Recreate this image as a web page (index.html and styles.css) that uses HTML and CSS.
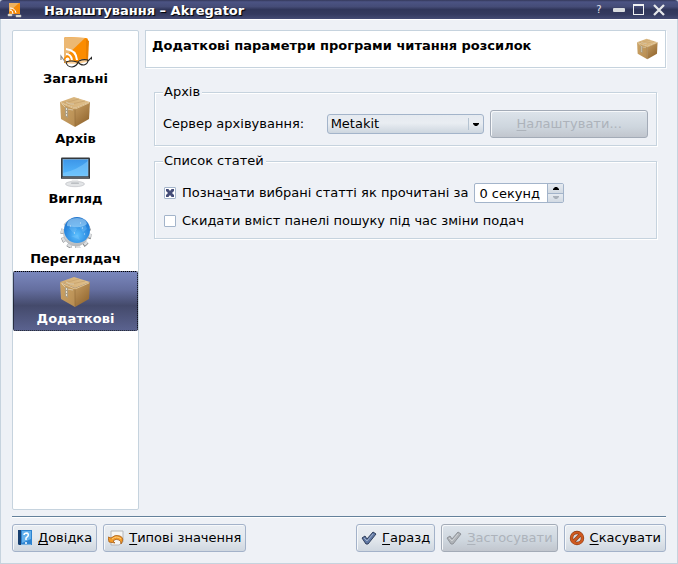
FILE: index.html
```html
<!DOCTYPE html>
<html lang="uk">
<head>
<meta charset="utf-8">
<title>Налаштування – Akregator</title>
<link rel="stylesheet" href="styles.css">
</head>
<body>
<svg class="defs" aria-hidden="true">
  <defs>
    <linearGradient id="boxL" x1="0" y1="0" x2="1" y2="1"><stop offset="0" stop-color="#cda567"/><stop offset="1" stop-color="#b68c52"/></linearGradient>
    <linearGradient id="boxR" x1="0" y1="0" x2="0.6" y2="1"><stop offset="0" stop-color="#c8a066"/><stop offset="1" stop-color="#93672f"/></linearGradient>
    <linearGradient id="boxT" x1="0" y1="0" x2="1" y2="0"><stop offset="0" stop-color="#d2ac72"/><stop offset="1" stop-color="#e0c08c"/></linearGradient>
    <linearGradient id="screen" x1="0" y1="0" x2="0" y2="1"><stop offset="0" stop-color="#3d96e8"/><stop offset="1" stop-color="#55baff"/></linearGradient>
    <radialGradient id="globe" cx="0.5" cy="0.7" r="0.75"><stop offset="0" stop-color="#5cc0ff"/><stop offset="0.6" stop-color="#2b8ae0"/><stop offset="1" stop-color="#1f6fc6"/></radialGradient>
    <linearGradient id="metal" x1="0" y1="0" x2="0" y2="1"><stop offset="0" stop-color="#ffffff"/><stop offset="1" stop-color="#b4b8bc"/></linearGradient>
    <symbol id="box" viewBox="1 0 32 32">
      <path d="M1 6 L16 12 V31 L2 23 Z" fill="url(#boxL)"/>
      <path d="M16 12 L31 6 L30 23 L16 31 Z" fill="url(#boxR)"/>
      <path d="M1 6 L15 1 L31 6 L16 12 Z" fill="url(#boxT)"/>
      <path d="M5 7 L20 3 M8 9 L26 5" stroke="#c7a26d" stroke-width="0.800" fill="none"/>
      <path d="M2 7 L16 13 L30 7" stroke="#e8cfa2" stroke-width="0.800" fill="none"/>
      <path d="M16 13 V30" stroke="#8d6836" stroke-width="0.600"/>
      <path d="M3 8 L8 13 L14 14 M7 6 L11 8 L15 8" stroke="#ddd2ba" stroke-width="0.800" fill="none"/>
      <path d="M6 11 L9 12 V22 L6 20 Z" fill="#aa9d83"/>
      <path d="M7.500 12 V20" stroke="#e6e0d2" stroke-dasharray="2 1"/>
    </symbol>
    <symbol id="feed" viewBox="0 0 32 32">
      <path d="M4 3 Q4 1 6 1 L26 2 Q28 2 28 4 L28 25 Q20 29 4 27 Z" fill="#fb8c00"/>
      <path d="M4 3 Q4 1 6 1 L25 2 L4 22 Z" fill="#ecb873"/>
      <path d="M26 3 L29 5 L28 25 L26 26 Z" fill="#e98000"/>
      <g fill="none" stroke="#fff" stroke-width="2"><path d="M6 13 Q16 14 17 24"/><path d="M6 18 Q11 18 12 24"/></g>
      <circle cx="7.500" cy="23.500" r="2" fill="#fff"/>
      <g fill="#fff" fill-opacity="0.600"><ellipse cx="12" cy="27.500" rx="5" ry="3"/><ellipse cx="23" cy="26" rx="5" ry="3"/></g>
      <path d="M6 26 Q7 31 12 31 Q17 30 18 26 M18 25 Q19 29 24 29 Q28 28 28 24 M28 25 L32 21 L32 24 M6 26 Q11 24 17 26 M19 25 Q23 23 28 24" fill="none" stroke="#292929" stroke-width="1.100"/>
      <path d="M6 27 L1 20 V24" fill="none" stroke="#8d8d8d" stroke-width="1.200"/>
    </symbol>
    <symbol id="monitor" viewBox="1 0 32 32">
      <ellipse cx="16" cy="28" rx="9.500" ry="2.700" fill="#e2e4e6" stroke="#b8bbbf" stroke-width="0.600"/>
      <path d="M13 23 H19 L20 28 H12 Z" fill="url(#metal)"/>
      <rect x="2" y="1.500" width="29" height="21.500" rx="1" fill="#34383c"/>
      <rect x="4" y="3.500" width="25" height="16.500" fill="url(#screen)" stroke="#86bce9" stroke-width="0.700"/>
      <path d="M4 17 Q18 14 29 5 V20 H4 Z" fill="#8dd2ff" opacity="0.450"/>
      <path d="M3 22 H30" stroke="#a2a6a9" stroke-width="0.800"/>
    </symbol>
    <symbol id="web" viewBox="0 0 32 32">
      <circle cx="16" cy="18" r="13" fill="none" stroke="#7d8084" stroke-width="5" stroke-dasharray="4.500 3.670"/>
      <circle cx="16" cy="17.500" r="13" fill="none" stroke="#dcdee0" stroke-width="4.500" stroke-dasharray="4 4.170"/>
      <circle cx="16" cy="17.500" r="12.500" fill="url(#metal)" stroke="#b4b7bc" stroke-width="0.700"/>
      <circle cx="17" cy="14" r="13" fill="url(#globe)"/>
      <path d="M7 8 Q8 2 17 2 Q26 2 27 8 Q22 13 7 10 Z" fill="#b4defc" opacity="0.550"/>
      <path d="M9 12 L13 9 L17 13 L14 18 Z M19 10 L25 8 L27 13 L23 16 Z M11 20 L18 19 L20 24 Z" fill="#8bcefb" opacity="0.300"/>
      <path d="M10 10h1M20 7h1M22 12h1M14 17h1M24 18h1" stroke="#fff" opacity="0.700"/>
    </symbol>
    <symbol id="check" viewBox="0 0 16 16"><path d="M1 8 L4 6 L6 9 L12 2 L15 4 L7 14 L5 14 Z" stroke-width="1" stroke-linejoin="round"/><path d="M3 8 L6 11 L12 4" fill="none" stroke="#fff" stroke-opacity="0.400" stroke-width="1"/></symbol>
  </defs>
</svg>

<div class="window">
  <header class="titlebar">
    <svg class="icon-app" viewBox="0 0 16 16" aria-hidden="true"><path d="M2 1 H13 V12 H2 Z" fill="#f48a0b"/><path d="M2 1 H12 L2 10 Z" fill="#eeb15f"/><path d="M3 6 Q8 6 9 11 M3 8 Q6 8 6 12" stroke="#fff" stroke-width="1" fill="none"/><path d="M1 12 H5 V14 H1 Z M9 13 H14 V15 H9 Z M5 13 H9" fill="#e3e3df" stroke="#b9b9b5" stroke-width="0.500"/></svg>
    <h1 class="title">Налаштування – Akregator</h1>
    <div class="window-controls">
      <button class="control help" aria-label="Що це?">?</button>
      <button class="control" aria-label="Мінімізувати"><svg viewBox="0 0 12 12"><rect y="4" width="12" height="4" rx="1" fill="#d9dcdf"/></svg></button>
      <button class="control" aria-label="Максимізувати"><svg viewBox="0 0 12 12"><path d="M0 0 H11 V11 H0 Z M1 2 V10 H10 V2 Z" fill="#f0f1f3" fill-rule="evenodd"/></svg></button>
      <button class="control" aria-label="Закрити"><svg viewBox="0 0 12 12"><path d="M1 1 L11 11 M11 1 L1 11" stroke="#e4e6e9" stroke-width="2.300"/></svg></button>
    </div>
  </header>

  <main class="body">
    <div class="panes">
      <nav class="sidebar" aria-label="Розділи">
        <a class="page" href="#general"><svg class="page-icon"><use href="#feed"/></svg>Загальні</a>
        <a class="page" href="#archive"><svg class="page-icon"><use href="#box"/></svg>Архів</a>
        <a class="page" href="#appearance"><svg class="page-icon"><use href="#monitor"/></svg>Вигляд</a>
        <a class="page" href="#browser"><svg class="page-icon"><use href="#web"/></svg>Переглядач</a>
        <a class="page selected" href="#advanced" aria-current="page"><svg class="page-icon"><use href="#box"/></svg>Додаткові</a>
      </nav>
      <form class="content" id="advanced">
        <div class="page-header">
          <h2 class="page-title">Додаткові параметри програми читання розсилок</h2>
          <svg class="header-icon" aria-hidden="true"><use href="#box"/></svg>
        </div>
        <div class="groups">
          <fieldset class="group">
            <legend>Архів</legend>
            <div class="archive-row">
              <label for="backend">Сервер архівування:</label>
              <span class="combo">
                <select id="backend"><option>Metakit</option></select>
                <svg class="combo-arrow" viewBox="0 0 6 4" aria-hidden="true"><path d="M0 0 H6 V1 L4 3 H2 L0 1 Z"/></svg>
              </span>
              <button class="button configure" type="button" disabled><span><u>Н</u>алаштувати...</span></button>
            </div>
          </fieldset>
          <fieldset class="group articles">
            <legend>Список статей</legend>
            <div class="option">
              <input class="tick" type="checkbox" id="mark" checked>
              <label for="mark">Позна<u>ч</u>ати вибрані статті як прочитані за</label>
              <span class="spin">
                <input class="spin-value" type="text" value="0 секунд" aria-label="Затримка">
                <span class="spin-buttons">
                  <button type="button" aria-label="Більше"><svg viewBox="0 0 6 3"><path d="M2 0 H4 L6 2 V3 H0 V2 Z"/></svg></button>
                  <button type="button" aria-label="Менше" disabled><svg viewBox="0 0 6 3"><path d="M0 0 H6 V1 L4 3 H2 L0 1 Z"/></svg></button>
                </span>
              </span>
            </div>
            <div class="option">
              <input class="tick" type="checkbox" id="reset">
              <label for="reset">Скидати вміст панелі пошуку під час зміни подач</label>
            </div>
          </fieldset>
        </div>
      </form>
    </div>

    <footer class="actions">
      <button class="button"><svg viewBox="0 0 16 16"><path d="M1 0 H15 V15 H3 L1 14 Z" fill="#2d83d0"/><path d="M1 0 H4 V15 H2 L1 14 Z" fill="#173f70"/><path d="M5 1 H14 V9 L5 13 Z" fill="#63b0ec"/><path d="M7 5 Q7 3 10 3 Q12 4 11 6 L9 8 V10 M9 12 V14" fill="none" stroke="#fff" stroke-width="1.500"/><path d="M4 15 H14" stroke="#c9dce9"/></svg><span><u>Д</u>овідка</span></button>
      <button class="button"><svg viewBox="0 0 16 16"><path d="M3 1 H15 V12 L11 15 H3 Z" fill="#f6f6f5" stroke="#b3b6ba"/><path d="M0 7 L1 12 L7 13 L5 11 Q8 8 11 10 Q13 11 13 14 Q17 8 12 6 Q7 4 3 8 Z" fill="#f39a27" stroke="#a65e19" stroke-width="0.800"/><path d="M4 9 Q9 5 13 9" fill="none" stroke="#ffd07f"/></svg><span><u>Т</u>ипові значення</span></button>
      <span class="spacer"></span>
      <button class="button"><svg viewBox="0 0 16 16" fill="#6079a5" stroke="#303f5c"><use href="#check"/></svg><span><u>Г</u>аразд</span></button>
      <button class="button" disabled><svg viewBox="0 0 16 16" fill="#b0b4b9" stroke="#8f9399"><use href="#check"/></svg><span><u>З</u>астосувати</span></button>
      <button class="button"><svg viewBox="0 0 16 16"><circle cx="8" cy="8" r="5.500" fill="#d5dbe1" stroke="#8a3d18" stroke-width="3.400"/><path d="M4 12 L12 4" stroke="#8a3d18" stroke-width="3.400"/><circle cx="8" cy="8" r="5.500" fill="none" stroke="#cf5a20" stroke-width="2.200"/><path d="M4 12 L12 4" stroke="#cf5a20" stroke-width="2.200"/></svg><span><u>С</u>касувати</span></button>
    </footer>
  </main>
</div>
</body>
</html>
```
FILE: styles.css
```css
* { box-sizing: border-box; }

body {
  margin: 0;
  font: 13px/16px "DejaVu Sans", sans-serif;
  color: #000;
  background: #eef1f6;
}

.defs { position: absolute; width: 0; height: 0; }

h1, h2 { margin: 0; font-size: 13px; }

button, input, select { margin: 0; font: inherit; color: inherit; }

u { text-decoration: underline; text-underline-offset: 2px; text-decoration-skip-ink: none; }

.window {
  display: flex;
  flex-direction: column;
  min-height: 100vh;
  border: solid #c6d3de;
  border-width: 0 1px 1px;
}

.titlebar {
  display: flex;
  align-items: center;
  height: 19px;
  margin: 0 -1px;
  padding: 0 13px 0 7px;
  color: #fff;
  background: linear-gradient(#34385a, #4b5383 10%, #454c77 35%, #30365a 50%, #343a5f 75%, #444b74);
  border-radius: 3px 3px 0 0;
}

.icon-app { width: 16px; height: 16px; margin-right: 21px; }

.title { flex: 1; padding-top: 2px; text-shadow: 1px 1px 1px #000; }

.window-controls { display: flex; gap: 8px; padding-top: 1px; }

.control {
  width: 12px;
  height: 12px;
  padding: 0;
  border: 0;
  background: none;
}

.control svg { display: block; width: 12px; height: 12px; }

.help { color: #e2e4ec; font-size: 10px; line-height: 10px; }

.body {
  flex: 1;
  display: flex;
  flex-direction: column;
  padding: 10px 11px 11px;
  border-top: 1px solid #fff;
}

.panes { flex: 1; display: flex; gap: 6px; }

.sidebar {
  width: 127px;
  background: #fff;
  border: 1px solid #c6d3de;
  border-radius: 2px;
}

.page {
  display: flex;
  flex-direction: column;
  align-items: center;
  gap: 3px;
  height: 60px;
  padding-top: 4px;
  color: #000;
  font-weight: bold;
  text-decoration: none;
  border: 1px solid transparent;
}

.page-icon { width: 32px; height: 32px; }

.page.selected {
  color: #fff;
  background: linear-gradient(#7a87bd, #656fa0 30%, #444a6b 58%, #5a628f);
  border: 1px dotted #000;
  border-radius: 2px;
}

.content { flex: 1; }

.page-header {
  display: flex;
  justify-content: space-between;
  padding: 7px 6px;
  background: #fff;
  border: 1px solid #c6d3de;
  box-shadow: 1px 1px #fff;
}

.header-icon { width: 22px; height: 22px; }

.groups { display: grid; gap: 7px; padding: 16px 9px; }

.group {
  min-width: 0;
  margin: 0;
  padding: 10px 8px 7px;
  border: 1px solid #c6d3de;
  box-shadow: 1px 1px #fff, inset 1px 1px #fff;
}

.group legend { padding: 0 2px 0 1px; background: #eef1f6; }

.archive-row {
  display: grid;
  grid-template-columns: repeat(3, 1fr);
  gap: 6px;
  align-items: center;
}

.combo { position: relative; }

.combo select {
  display: block;
  width: 100%;
  height: 20px;
  padding: 0 20px 0 3px;
  appearance: none;
  border: 1px solid #a3b4ca;
  border-radius: 3px;
  background:
    linear-gradient(#b5c3d1, #b5c3d1) right 14px center / 1px 12px no-repeat,
    linear-gradient(#e5eaf0, #e9edf2 45%, #cdd6df);
}

.combo-arrow { position: absolute; right: 5px; top: 9px; width: 6px; height: 4px; pointer-events: none; }

.button {
  display: flex;
  align-items: center;
  justify-content: center;
  gap: 5px;
  height: 28px;
  padding: 0 4px;
  border: 1px solid #a3b2c9;
  border-radius: 3px;
  background: linear-gradient(#e9edf2, #e4e9ee 50%, #cfd7e0);
  box-shadow: inset 1px 1px #f6f8fa;
}

.button svg { width: 16px; height: 16px; }

.button:disabled {
  color: #adb3bb;
  border-color: #a3abb7;
  background: linear-gradient(#dde4eb, #ced6de 60%, #c1c6ce);
}

.articles { display: grid; gap: 8px; padding: 14px 8px 7px; }

.option { display: flex; align-items: center; gap: 6px; height: 20px; padding-left: 1px; }

.tick {
  display: grid;
  place-items: center;
  width: 12px;
  height: 12px;
  appearance: none;
  background: #fff;
  border: 1px solid #a3b4ca;
  border-radius: 1px;
}

.tick:checked::before {
  content: "";
  width: 8px;
  height: 8px;
  background: #454d78;
  clip-path: polygon(0 0, 30% 0, 50% 25%, 70% 0, 100% 0, 100% 25%, 75% 50%, 100% 75%, 100% 100%, 70% 100%, 50% 75%, 30% 100%, 0 100%, 0 75%, 25% 50%, 0 25%);
}

.spin {
  display: flex;
  width: 90px;
  height: 20px;
  background: #fff;
  border: 1px solid #a3b4ca;
  border-radius: 2px;
}

.spin-value { flex: 1; min-width: 0; padding: 2px 0 0 4px; border: 0; background: none; }

.spin-buttons { display: grid; width: 16px; border-left: 1px solid #a3b4ca; }

.spin-buttons button {
  display: grid;
  place-items: center;
  padding: 0;
  border: 0;
  background: linear-gradient(#e5eaf0, #d2dae3);
}

.spin-buttons button + button { border-top: 1px solid #a3b4ca; }

.spin-buttons svg { width: 6px; height: 3px; }

.spin-buttons button:disabled { fill: #a9b1bb; }

.actions {
  display: flex;
  gap: 6px;
  margin-top: 6px;
  padding-top: 7px;
  border-top: 1px solid #64819b;
  box-shadow: inset 0 1px #fff;
}

.spacer { flex: 1; }
```
